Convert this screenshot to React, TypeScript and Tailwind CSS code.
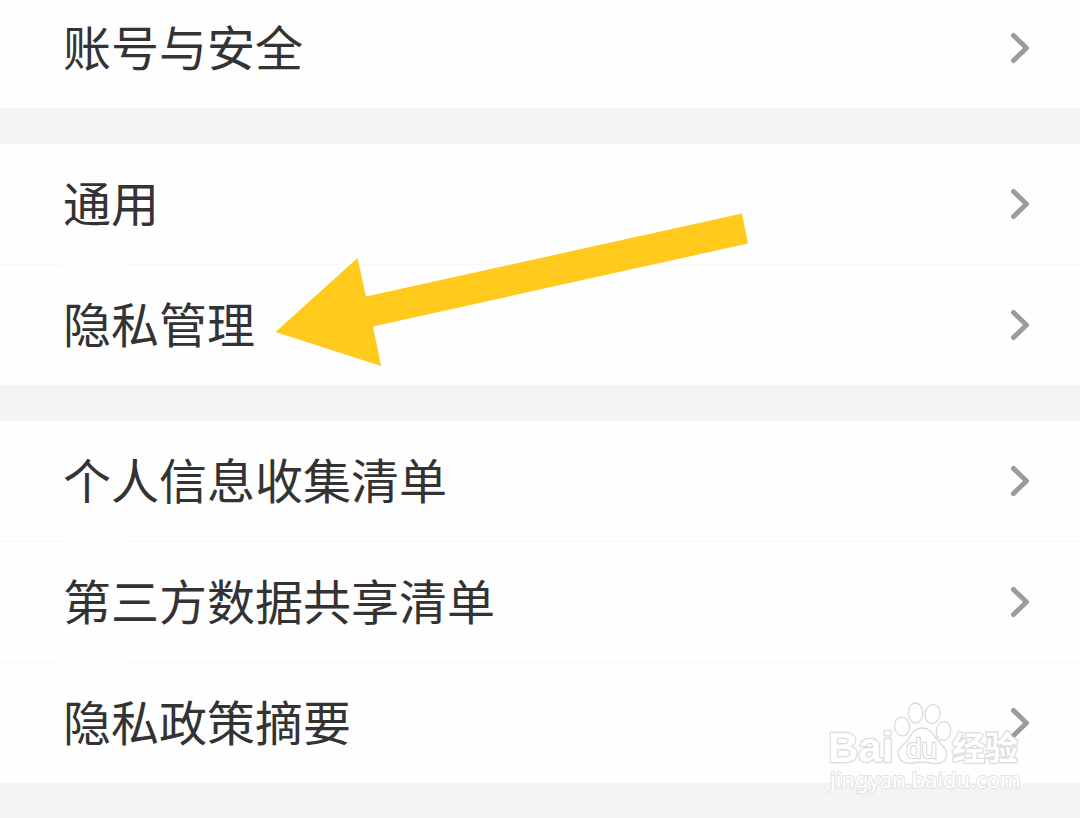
import { Fragment } from "react";

const groups: string[][] = [
  ["账号与安全"],
  ["通用", "隐私管理"],
  ["个人信息收集清单", "第三方数据共享清单", "隐私政策摘要"],
];

function Chevron() {
  return (
    <svg
      className="h-10 w-6 shrink-0"
      viewBox="0 0 24 40"
      fill="none"
      stroke="#9b9b9b"
      strokeWidth="5"
      strokeLinecap="round"
      strokeLinejoin="round"
      aria-hidden="true"
    >
      <path d="M5.500 7.500 18.500 20 5.500 32.500" />
    </svg>
  );
}

function Separator() {
  return (
    <div className="flex h-px gap-16" aria-hidden="true">
      <div className="w-[63px] bg-[#f7f7f7]" />
      <div className="flex-1 bg-[#f7f7f7]" />
    </div>
  );
}

function Row({ label }: { label: string }) {
  return (
    <button
      type="button"
      className="flex h-[120px] w-full items-center justify-between pr-12 pl-[63px] text-left text-[48px] leading-[72px] text-[#333333]"
    >
      <span className="pb-1.5">{label}</span>
      <Chevron />
    </button>
  );
}

function Arrow() {
  return (
    <svg
      className="pointer-events-none absolute top-[213px] left-[275px] h-[154px] w-[474px]"
      viewBox="275 213 474 154"
      aria-hidden="true"
    >
      <path
        fill="#ffca1b"
        d="M275.5 332 357.5 258 366 296.500 742 213.500 748 243.500 373 326.500 381 366Z"
      />
    </svg>
  );
}

function Watermark() {
  return (
    <svg
      className="pointer-events-none absolute top-[698px] right-[48px] h-[108px] w-[208px]"
      viewBox="824 698 208 108"
      fill="#ffffff"
      stroke="#dadada"
      strokeWidth="1.3"
      strokeLinejoin="round"
      aria-label="Baidu 经验"
    >
      <g paintOrder="stroke" strokeWidth="2.4">
        <text x="828" y="762" fontSize="42" fontWeight="700" fontFamily="Liberation Sans, Arial, sans-serif">
          Bai
        </text>
        <text
          x="952"
          y="760"
          fontSize="33"
          fontWeight="700"
          fontFamily="Liberation Sans, Noto Sans CJK SC, sans-serif"
        >
          经验
        </text>
        <text
          x="830"
          y="788"
          fontSize="22"
          stroke="#e2e2e2"
          strokeWidth="2"
          fontFamily="Noto Sans, Open Sans, sans-serif"
        >
          jingyan.baidu.com
        </text>
      </g>
      <ellipse cx="902" cy="726.500" rx="7.500" ry="9.500" transform="rotate(-8 902 726.500)" />
      <ellipse cx="915.500" cy="713" rx="7.200" ry="10" />
      <ellipse cx="932.500" cy="714" rx="7.500" ry="9.500" transform="rotate(10 932.500 714)" />
      <ellipse cx="943.500" cy="731" rx="7.200" ry="9.500" transform="rotate(8 943.500 731)" />
      <path d="M922 728C912 728 911 738 905 743C900 747 897 751 898.500 756C901 765 911 763.500 916 762.500C920 762 926 762 930 763C937 764.500 945 764 946.500 756C947.500 750 943 746 939 742C933 736 932 728 922 728Z" />
      <text
        x="906"
        y="758"
        fontSize="28"
        strokeWidth="2.4"
        paintOrder="stroke"
        fontFamily="Liberation Sans, Arial, sans-serif"
      >
        du
      </text>
    </svg>
  );
}

export default function App() {
  return (
    <main className="relative min-h-screen overflow-hidden bg-[#f4f4f4] font-['Noto_Sans_CJK_SC',sans-serif]">
      <div className="-mt-3 flex flex-col gap-9">
        {groups.map((rows) => (
          <section key={rows[0]} className="bg-[#fefefe]">
            {rows.map((label, i) => (
              <Fragment key={label}>
                {i > 0 && <Separator />}
                <Row label={label} />
              </Fragment>
            ))}
          </section>
        ))}
      </div>
      <Arrow />
      <Watermark />
    </main>
  );
}
